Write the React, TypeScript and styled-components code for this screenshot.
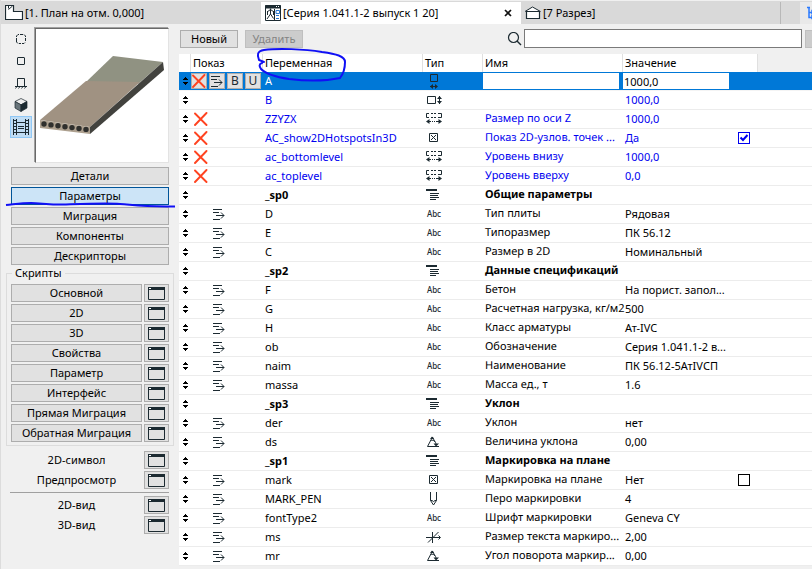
import React, { useState } from "react";
import styled, { createGlobalStyle, css } from "styled-components";

const ink = "#1c2a31";
const link = "#0000f0";
const pen = "#1010f5";

const GlobalStyle = createGlobalStyle`
  *, *::before, *::after { box-sizing: border-box; }
  html, body, #root { height: 100%; }
  body { margin: 0; background: #f0f0f0; overflow: hidden; }
  body, button, input { font-family: "Noto Sans", "Open Sans", sans-serif; font-size: 11px; color: #000; }
  button { padding: 0; margin: 0; }
  svg { display: block; flex: none; }
`;

const Page = styled.div`
  display: flex;
  flex-direction: column;
  min-height: 100%;
  border-left: 1px solid #dcdcdc;
`;

/* ---------- document tabs ---------- */

const TabBar = styled.nav`
  display: grid;
  grid-template-columns: 260fr 260fr 259fr 20px 12px;
  height: 24px;
  padding-top: 1px;
  background: #d9d9d9;
  border-top: 1px solid #f0f0f0;
`;

const Tab = styled.div<{ $active?: boolean }>`
  display: flex;
  align-items: center;
  gap: 3px;
  padding: 0 8px 0 4px;
  min-width: 0;
  background: ${(p) => (p.$active ? "#fff" : "transparent")};
`;

const TabButton = styled.button`
  display: flex;
  flex: 1;
  align-items: center;
  gap: 2px;
  border: 0;
  background: none;
  white-space: nowrap;
  line-height: 14px;
`;

const CloseButton = styled.button`
  display: grid;
  place-items: center;
  width: 10px;
  height: 10px;
  border: 0;
  background: none;
`;

const TabDivider = styled.div`
  border-left: 1px solid #b8b8b8;
`;

const TreeButton = styled.button`
  display: flex;
  align-items: center;
  padding-left: 7px;
  overflow: hidden;
  border: 0;
  background: #e9e9e9;
`;

/* ---------- shell ---------- */

const Body = styled.div`
  display: flex;
  flex: 1;
  min-height: 0;
`;

const Sidebar = styled.aside`
  display: flex;
  flex-direction: column;
  width: 178px;
  flex: none;
  padding: 4px 5px 0;
`;

const Main = styled.main`
  flex: 1;
  min-width: 0;
`;

/* ---------- sidebar ---------- */

const PreviewRow = styled.div`
  display: flex;
  gap: 3px;
  padding: 0 5px 0 4px;
`;

const ViewModes = styled.div`
  display: flex;
  flex-direction: column;
`;

const ModeButton = styled.button<{ $on?: boolean }>`
  display: grid;
  place-items: center;
  width: 22px;
  height: 22px;
  border: 1px solid ${(p) => (p.$on ? "#90c8f6" : "transparent")};
  background: ${(p) => (p.$on ? "#c0dcf3" : "transparent")};
`;

const Preview = styled.div`
  flex: 1;
  height: 135px;
  background: #fff;
  border: 1px solid;
  border-color: #696969 #e3e3e3 #e3e3e3 #696969;
  box-shadow: -1px -1px 0 #a0a0a0;
`;

const flatButton = css`
  height: 18px;
  border: 1px solid #adadad;
  background: #e1e1e1;
  line-height: 16px;
`;

const NavList = styled.div`
  display: flex;
  flex-direction: column;
  gap: 2px;
  padding: 4px 5px 0;
`;

const NavButton = styled.button<{ $active?: boolean }>`
  ${flatButton}
  position: relative;
  width: 100%;
  ${(p) => p.$active && css`
    border-color: #005499;
    background: #cce4f7;
  `}
`;

const Underline = styled.svg`
  position: absolute;
  z-index: 1;
  left: -6px;
  top: 12px;
  pointer-events: none;
  overflow: visible;
`;

const Scripts = styled.fieldset`
  margin: 0;
  margin-top: 1px;
  padding: 0 4px 3px;
  border: 1px solid #dcdcdc;
  min-width: 0;
  legend {
    padding: 0 3px;
    margin-left: 1px;
    line-height: 14px;
    height: 14px;
  }
`;

const ScriptRows = styled.div<{ $plain?: boolean }>`
  display: flex;
  flex-direction: column;
  gap: 2px;
  padding: ${(p) => (p.$plain ? "5px 5px 0" : "4px 0 0")};
`;

const ScriptRow = styled.div`
  display: grid;
  grid-template-columns: 1fr 25px;
  gap: 2px;
  text-align: center;
  line-height: 18px;
`;

const WindowButton = styled.button`
  ${flatButton}
  display: grid;
  place-items: center;
`;

const Rule = styled.hr`
  width: calc(100% - 9px);
  margin: 3px 5px -2px 4px;
  border: 0;
  border-top: 1px solid #a0a0a0;
`;

/* ---------- toolbar ---------- */

const Toolbar = styled.div`
  display: flex;
  align-items: flex-end;
  height: 30px;
  padding: 0 0 6px 1px;
`;

const ToolButton = styled.button`
  ${flatButton}
  width: 58px;
  margin-right: 7px;
  &:disabled {
    border-color: #bfbfbf;
    background: #cccccc;
    color: #838383;
  }
`;

const Search = styled.label`
  display: flex;
  flex: 1;
  align-items: flex-end;
  justify-content: flex-end;
  gap: 1px;
`;

const SearchInput = styled.input`
  flex: 0 1 278px;
  height: 19px;
  border: 1px solid #7a7a7a;
  background: #fff;
  outline: none;
`;

const MoreButton = styled.button`
  width: 7px;
  height: 18px;
  margin-left: 3px;
  border: 1px solid #bfbfbf;
  border-right: 0;
  background: #ccc;
  overflow: hidden;
`;

/* ---------- parameter table ---------- */

const Grid = styled.table`
  width: 100%;
  table-layout: fixed;
  border-spacing: 0;
  background: #fff;
`;

const Col = styled.col<{ $w?: number }>`
  width: ${(p) => (p.$w ? `${p.$w}px` : "auto")};
`;

const HeadCell = styled.th`
  position: relative;
  height: 18px;
  padding: 0 0 0 2px;
  border-right: 1px solid #e0e0e0;
  font-weight: 400;
  text-align: left;
  line-height: 18px;
  &:last-child { background: #f0f0f0; border: 0; }
`;

const Loop = styled.svg`
  position: absolute;
  z-index: 1;
  left: -7px;
  top: -6px;
  pointer-events: none;
  overflow: visible;
`;

const Cell = styled.td`
  height: 19px;
  padding: 0 0 0 2px;
  border-bottom: 1px solid #ececec;
  line-height: 18px;
  white-space: nowrap;
`;

const TitleCell = styled(Cell)`
  text-rendering: geometricPrecision;
`;

const Row = styled.tr<{ $tone: Tone }>`
  color: ${(p) => (p.$tone === "system" ? link : p.$tone === "selected" ? "#fff" : "#000")};
  font-weight: ${(p) => (p.$tone === "heading" ? 700 : 400)};
  ${(p) => p.$tone === "selected" && css`
    ${Cell} { background: #0078d7; border-color: #f4f4f4; }
  `}
`;

const Flags = styled.div<{ $buttons?: boolean }>`
  display: grid;
  grid-template-columns: repeat(4, 16px);
  gap: 2px;
  align-items: center;
  justify-items: center;
  margin-left: ${(p) => (p.$buttons ? "-2px" : "0")};
`;

const FlagButton = styled.button`
  display: grid;
  place-items: center;
  width: 16px;
  height: 16px;
  border: 1px solid #adadad;
  background: #e1e1e1;
  color: ${ink};
  font-size: 12px;
  line-height: 14px;
`;

const Abc = styled.span`
  display: block;
  color: ${ink};
  font-family: "Noto Sans", sans-serif;
  font-size: 8px;
  font-weight: 500;
  line-height: 14px;
`;

const Field = styled.input<{ $gap: number }>`
  display: block;
  width: calc(100% + 2px - ${(p) => p.$gap}px);
  height: 16px;
  margin-left: -2px;
  padding: 0 1px;
  border: 0;
  background: #fff;
  outline: none;
`;

const ValueBox = styled.div`
  display: flex;
  align-items: center;
  justify-content: space-between;
  padding-right: 8px;
`;

const Check = styled.span`
  display: grid;
  width: 12px;
  height: 12px;
  > * { grid-area: 1 / 1; }
  svg { pointer-events: none; }
`;

const CheckInput = styled.input`
  appearance: none;
  width: 12px;
  height: 12px;
  margin: 0;
  border: 1px solid currentColor;
  background: #fff;
  color: inherit;
`;

const Centered = styled.div`
  display: grid;
  width: 10px;
  margin-left: -2px;
  padding-left: 4px;
`;

/* ---------- icons ---------- */

const PlanIcon = () => (
  <svg width="18" height="16" viewBox="0 0 18 16" fill="none" stroke={ink}>
    <path d="M.5 14.5V.5H8.500V6.500H17.500V14.500Z" fill="#fff" strokeWidth="1.200" />
    <path d="M3.500 .5V3.500M3.500 4.500L7.500 1" />
  </svg>
);

const ObjectIcon = () => (
  <svg width="16" height="16" viewBox="0 0 16 16" fill="none" stroke={ink}>
    <path d="M.5 .5H15.500V15.500H.5Z" />
    <path d="M0 2H16" strokeWidth="3" />
    <path d="M11 1.500h1M13 1.500h1" stroke="#fff" />
    <path d="M5.500 3.500V9M2 7l3.500-2.500L9 7M5.500 9L2 14M5.500 9l3 4.500M2.500 6v4M8.500 6v4" />
    <path d="M9.500 4V15" />
    <path d="M11 5.500h3.500v3H11zM11 10.500h3M11 13.500h3" stroke="#2979d0" />
  </svg>
);

const SectionTabIcon = () => (
  <svg width="16" height="14" viewBox="0 0 16 14" fill="#fff" stroke={ink}>
    <path d="M0 5.500L7.500 1L15.500 5.500" />
    <path d="M1.500 5.500H14.500V12.500H1.500Z" strokeWidth="1.200" />
  </svg>
);

const TreeIcon = () => (
  <svg width="12" height="14" viewBox="0 0 12 14" fill="none" stroke="#2979ff" strokeWidth="1.500">
    <path d="M0 1.500h3M2 1v10.500h4M2 6.500h4M5 4.500h6v3H5zM5 9.500h6v3H5z" />
  </svg>
);

const CloseIcon = () => (
  <svg width="8" height="8" viewBox="0 0 8 8" stroke="#111" strokeWidth="1.700">
    <path d="M1 1l6 6M7 1L1 7" />
  </svg>
);

const SearchIcon = () => (
  <svg width="16" height="16" viewBox="0 0 16 16" fill="none" stroke={ink}>
    <circle cx="6.500" cy="5.500" r="5" strokeWidth="1.200" />
    <path d="M10 9l4 4" strokeWidth="1.500" />
  </svg>
);

const WindowIcon = () => (
  <svg width="17" height="14" viewBox="0 -1 17 14" fill="none" stroke={ink}>
    <path d="M.5 .5h16v12H.5z" />
    <path d="M0 1.500h17" strokeWidth="3" />
    <path d="M1 1.500h2" stroke="#fff" />
  </svg>
);

const SortIcon = () => (
  <svg width="5" height="8" viewBox="0 0 5 8" fill="#000">
    <path d="M2 0h1v1h1v1h1v1H0V2h1V1h1zM0 5h5v1H4v1H3v1H2V7H1V6H0z" />
  </svg>
);

const CrossIcon = () => (
  <svg width="14" height="14" viewBox="0 0 14 14" stroke="#ff4320" strokeWidth="1.900" strokeLinecap="round">
    <path d="M1 1.500l11.500 11.500M12.500 1L1 13" />
  </svg>
);

const IndentIcon = () => (
  <svg width="12" height="12" viewBox="0 0 12 12" fill="none" stroke={ink}>
    <path d="M0 1.500h9M0 4.500h6M3 7.500h8M0 11.500h7" />
    <path d="M8 4.500l3 3L8 10.500" />
  </svg>
);

const DottedViewIcon = () => (
  <svg width="10" height="10" viewBox="0 0 10 10" fill="none" stroke={ink}>
    <path d="M.5 3V2L2 .5h1M4 .5h3M8 .5l1.500 1.500v1M9.500 4v3M9 8.500l-1 1H6M5 9.500H3M2 9.500L.5 8V4" />
  </svg>
);

const SquareViewIcon = () => (
  <svg width="10" height="10" viewBox="0 0 10 10" fill="none" stroke={ink}>
    <rect x="1.500" y="1.500" width="7" height="7" rx=".5" />
  </svg>
);

const ElevationIcon = () => (
  <svg width="14" height="12" viewBox="0 0 14 12" fill="none" stroke={ink}>
    <path d="M3.500 9V1.500h7V9M1 9.500h12" />
    <path d="M3 9.500L1.500 11.500M6 9.500l-1.500 2M9 9.500l-1.500 2M12 9.500l-1.500 2" strokeWidth=".9" />
  </svg>
);

const CubeIcon = () => (
  <svg width="14" height="14" viewBox="0 0 14 14" stroke={ink} strokeWidth=".7">
    <path d="M7 .5L13 3.500L7 6.800L1 3.500Z" fill="#eee" />
    <path d="M1 3.500L7 6.800V13.500L1 10Z" fill="#68747a" />
    <path d="M7 6.800L13 3.500V10L7 13.500Z" fill={ink} />
  </svg>
);

const FilmIcon = () => (
  <svg width="18" height="16" viewBox="0 0 18 16" fill="none" stroke={ink}>
    <path d="M1.500 0v16M4.500 0v16M13.500 0v16M16.500 0v16M4 3.500h10M4 13.500h10" />
    <path d="M2 1.500h2M2 4.500h2M2 7.500h2M2 10.500h2M2 13.500h2M14 1.500h2M14 4.500h2M14 7.500h2M14 10.500h2M14 13.500h2" />
    <path d="M6 7.500h6M6 9.500h6" />
  </svg>
);

const WidthIcon = () => (
  <svg width="10" height="16" viewBox="0 0 10 16" fill="none" stroke={ink}>
    <path d="M1.500 1.500h7v7h-7zM1 13.500h7" />
    <path d="M4 11v5L1 13.500zM6 11v5l3-2.500z" fill={ink} stroke="none" />
  </svg>
);

const HeightIcon = () => (
  <svg width="16" height="10" viewBox="0 0 16 10" fill="none" stroke={ink}>
    <path d="M1.500 1.500h8v7h-8zM13.500 1v8" />
    <path d="M11 4h5l-2.500-3zM11 6h5l-2.500 3z" fill={ink} stroke="none" />
  </svg>
);

const LengthIcon = () => (
  <svg width="16" height="12" viewBox="0 0 16 12" fill="none" stroke={ink}>
    <path d="M3 .5H.5V4.500H3M5 .5h2M8 .5h2M5 4.500h2M8 4.500h2M12 .5h3.500V4.500H12" />
    <path d="M2 8.500h3M6 8.500h1M8 8.500h1M10 8.500h4" />
    <path d="M3.500 6v5L0 8.500zM12.500 6v5L16 8.500z" fill={ink} stroke="none" />
  </svg>
);

const BooleanIcon = () => (
  <svg width="10" height="10" viewBox="0 0 10 10" fill="none" stroke={ink}>
    <path d="M.5 .5h8v8h-8zM2 2l5 5M7 2L2 7" />
  </svg>
);

const HeadingIcon = () => (
  <svg width="16" height="12" viewBox="0 0 16 12" stroke={ink}>
    <path d="M0 1h11" strokeWidth="2" />
    <path d="M4 4.500h9M4 6.500h8M4 8.500h9M4 10.500h6" />
  </svg>
);

const AngleIcon = () => (
  <svg width="14" height="12" viewBox="0 0 14 12" fill="none" stroke={ink}>
    <path d="M5.500 1L.5 10.500H12M5.500 1L8 6M3.500 4.500c3.500-1 5.500 1.500 5.500 4" />
    <path d="M3 3l4 0-2-2.500zM6.500 7.500H12L9 10.500z" fill={ink} stroke="none" />
  </svg>
);

const PenIcon = () => (
  <svg width="8" height="14" viewBox="0 0 8 14" fill="none" stroke={ink}>
    <path d="M.5 0v8.500L3.500 13L6.500 8.500V0M.5 8.500h1.500l1.500 1 1.500-1h1.500" />
  </svg>
);

const RealIcon = () => (
  <svg width="16" height="12" viewBox="0 0 16 12" fill="none" stroke={ink}>
    <path d="M0 6.500h14M6.500 1v11M2 11.500L12.500 1M12.500 4.500l2 2-2 2" />
  </svg>
);

const typeIcons = {
  width: WidthIcon,
  height: HeightIcon,
  length: LengthIcon,
  bool: BooleanIcon,
  heading: HeadingIcon,
  text: () => <Abc>Abc</Abc>,
  angle: AngleIcon,
  pen: PenIcon,
  real: RealIcon,
};

const TypeSlot = styled.div`
  display: grid;
  place-items: center;
  width: 18px;
  height: 16px;
`;

const SlabPreview = () => (
  <svg width="100%" height="100%" viewBox="36 29 132 133" role="img" aria-label="Плита перекрытия">
    <path d="M113 56L163 62L138 84L86 82Z" fill="#909282" />
    <path d="M86 81L140 82L90 127L40 120Z" fill="#a09282" />
    <path d="M163 62L164 70L90 134V127Z" fill="#42423e" />
    <path d="M40 120L90 127V134L40 128Z" fill="#ada08f" />
    <g fill="#2f2f2d">
      {[44, 51, 58, 65, 72, 79, 86].map((x, i) => (
        <circle key={x} cx={x} cy={124 + i * 0.9} r="2.700" />
      ))}
    </g>
  </svg>
);

/* ---------- data ---------- */

type Tone = "selected" | "system" | "heading" | "normal";
type Param = {
  name: string;
  type: keyof typeof typeIcons;
  title?: string;
  value?: string;
  tone?: Tone;
  hidden?: boolean;
  checked?: boolean;
};

const params: Param[] = [
  { name: "A", type: "width", value: "1000,0", tone: "selected" },
  { name: "B", type: "height", value: "1000,0", tone: "system" },
  { name: "ZZYZX", type: "length", title: "Размер по оси Z", value: "1000,0", tone: "system", hidden: true },
  { name: "AC_show2DHotspotsIn3D", type: "bool", title: "Показ 2D-узлов. точек ...", value: "Да", tone: "system", hidden: true, checked: true },
  { name: "ac_bottomlevel", type: "length", title: "Уровень внизу", value: "1000,0", tone: "system", hidden: true },
  { name: "ac_toplevel", type: "length", title: "Уровень вверху", value: "0,0", tone: "system", hidden: true },
  { name: "_sp0", type: "heading", title: "Общие параметры", tone: "heading" },
  { name: "D", type: "text", title: "Тип плиты", value: "Рядовая" },
  { name: "E", type: "text", title: "Типоразмер", value: "ПК 56.12" },
  { name: "C", type: "text", title: "Размер в 2D", value: "Номинальный" },
  { name: "_sp2", type: "heading", title: "Данные спецификаций", tone: "heading" },
  { name: "F", type: "text", title: "Бетон", value: "На порист. запол..." },
  { name: "G", type: "text", title: "Расчетная нагрузка, кг/м2", value: "500" },
  { name: "H", type: "text", title: "Класс арматуры", value: "Ат-IVC" },
  { name: "ob", type: "text", title: "Обозначение", value: "Серия 1.041.1-2 в..." },
  { name: "naim", type: "text", title: "Наименование", value: "ПК 56.12-5АтIVСП" },
  { name: "massa", type: "text", title: "Масса ед., т", value: "1.6" },
  { name: "_sp3", type: "heading", title: "Уклон", tone: "heading" },
  { name: "der", type: "text", title: "Уклон", value: "нет" },
  { name: "ds", type: "angle", title: "Величина уклона", value: "0,00" },
  { name: "_sp1", type: "heading", title: "Маркировка на плане", tone: "heading" },
  { name: "mark", type: "bool", title: "Маркировка на плане", value: "Нет", checked: false },
  { name: "MARK_PEN", type: "pen", title: "Перо маркировки", value: "4" },
  { name: "fontType2", type: "text", title: "Шрифт маркировки", value: "Geneva CY" },
  { name: "ms", type: "real", title: "Размер текста маркиро...", value: "2,00" },
  { name: "mr", type: "angle", title: "Угол поворота маркир...", value: "0,00" },
];

const sections = ["Детали", "Параметры", "Миграция", "Компоненты", "Дескрипторы"];
const scripts = ["Основной", "2D", "3D", "Свойства", "Параметр", "Интерфейс", "Прямая Миграция", "Обратная Миграция"];
const modes = [
  ["2D-символ", DottedViewIcon],
  ["План", SquareViewIcon],
  ["Фасад", ElevationIcon],
  ["3D", CubeIcon],
  ["Предпросмотр", FilmIcon],
] as const;

const OpenWindow = ({ name }: { name: string }) => (
  <WindowButton aria-label={`${name}: открыть окно`}><WindowIcon /></WindowButton>
);

const ParamRow = ({ p }: { p: Param }) => {
  const tone = p.tone ?? "normal";
  const selected = tone === "selected";
  const [on, setOn] = useState(!!p.checked);
  const Icon = typeIcons[p.type];
  return (
    <Row $tone={tone}>
      <Cell><Centered><SortIcon /></Centered></Cell>
      <Cell>
        {selected ? (
          <Flags $buttons>
            <FlagButton aria-label="Скрыть"><CrossIcon /></FlagButton>
            <FlagButton aria-label="Отступ"><IndentIcon /></FlagButton>
            <FlagButton>B</FlagButton>
            <FlagButton>U</FlagButton>
          </Flags>
        ) : (
          <Flags>
            {p.hidden ? <CrossIcon /> : <span />}
            {tone === "normal" && <IndentIcon />}
          </Flags>
        )}
      </Cell>
      <Cell>{p.name}</Cell>
      <Cell><TypeSlot><Icon /></TypeSlot></Cell>
      <TitleCell>{selected ? <Field $gap={4} aria-label="Имя" /> : p.title}</TitleCell>
      <Cell>
        {selected ? (
          <Field $gap={29} aria-label="Значение" defaultValue={p.value} />
        ) : (
          <ValueBox>
            {p.value}
            {p.checked !== undefined && (
              <Check>
                <CheckInput type="checkbox" aria-label={p.title} checked={on} onChange={() => setOn(!on)} />
                {on && (
                  <svg width="12" height="12" viewBox="0 0 12 12" fill="none" stroke="currentColor" strokeWidth="2">
                    <path d="M2.500 5.500l2.500 2.500 4.500-5" />
                  </svg>
                )}
              </Check>
            )}
          </ValueBox>
        )}
      </Cell>
      <Cell />
    </Row>
  );
};

export default function App() {
  const [section, setSection] = useState("Параметры");
  return (
    <Page>
      <GlobalStyle />
      <TabBar>
        <Tab><TabButton><PlanIcon />[1. План на отм. 0,000]</TabButton></Tab>
        <Tab $active>
          <TabButton><ObjectIcon />[Серия 1.041.1-2 выпуск 1 20]</TabButton>
          <CloseButton aria-label="Закрыть"><CloseIcon /></CloseButton>
        </Tab>
        <Tab><TabButton><SectionTabIcon />[7 Разрез]</TabButton></Tab>
        <TabDivider />
        <TreeButton aria-label="Навигатор"><TreeIcon /></TreeButton>
      </TabBar>
      <Body>
        <Sidebar>
          <PreviewRow>
            <ViewModes>
              {modes.map(([name, Icon], i) => (
                <ModeButton key={name} $on={i === 4} aria-label={name}><Icon /></ModeButton>
              ))}
            </ViewModes>
            <Preview><SlabPreview /></Preview>
          </PreviewRow>
          <NavList>
            {sections.map((name) => (
              <NavButton key={name} $active={section === name} onClick={() => setSection(name)}>
                {name}
                {name === "Параметры" && (
                  <Underline width="170" height="10" viewBox="0 0 170 10" fill="none" stroke={pen} strokeWidth="2">
                    <path d="M0 5C10 4 16 3 25 3S45 5 60 4.500S100 3 114 4S135 7 169 6.500" />
                  </Underline>
                )}
              </NavButton>
            ))}
          </NavList>
          <Scripts>
            <legend>Скрипты</legend>
            <ScriptRows>
              {scripts.map((name) => (
                <ScriptRow key={name}><NavButton>{name}</NavButton><OpenWindow name={name} /></ScriptRow>
              ))}
            </ScriptRows>
          </Scripts>
          <ScriptRows $plain>
            {["2D-символ", "Предпросмотр"].map((name) => (
              <ScriptRow key={name}><span>{name}</span><OpenWindow name={name} /></ScriptRow>
            ))}
          </ScriptRows>
          <Rule />
          <ScriptRows $plain>
            {["2D-вид", "3D-вид"].map((name) => (
              <ScriptRow key={name}><span>{name}</span><OpenWindow name={name} /></ScriptRow>
            ))}
          </ScriptRows>
        </Sidebar>
        <Main>
          <Toolbar>
            <ToolButton>Новый</ToolButton>
            <ToolButton disabled>Удалить</ToolButton>
            <Search>
              <SearchIcon />
              <SearchInput type="text" aria-label="Поиск" />
            </Search>
            <MoreButton aria-label="Назад" />
          </Toolbar>
          <Grid>
            <colgroup>
              <Col $w={12} /><Col $w={72} /><Col $w={160} /><Col $w={60} /><Col $w={140} /><Col $w={135} /><Col />
            </colgroup>
            <thead>
              <tr>
                <HeadCell />
                <HeadCell>Показ</HeadCell>
                <HeadCell>
                  Переменная
                  <Loop width="92" height="34" viewBox="0 0 92 34" fill="none" stroke={pen} strokeWidth="2" strokeLinecap="round">
                    <path d="M8 14L3 12C1 7 1 3 8 2C22 0 48 1 66 4C80 6 89 8 89 14C89 20 88 25 84 30C70 33 50 33 33 31C20 29 10 26 5 21C3 18 3 16 6 15" />
                  </Loop>
                </HeadCell>
                <HeadCell>Тип</HeadCell>
                <HeadCell>Имя</HeadCell>
                <HeadCell>Значение</HeadCell>
                <HeadCell />
              </tr>
            </thead>
            <tbody>
              {params.map((p) => <ParamRow key={p.name} p={p} />)}
            </tbody>
          </Grid>
        </Main>
      </Body>
    </Page>
  );
}
